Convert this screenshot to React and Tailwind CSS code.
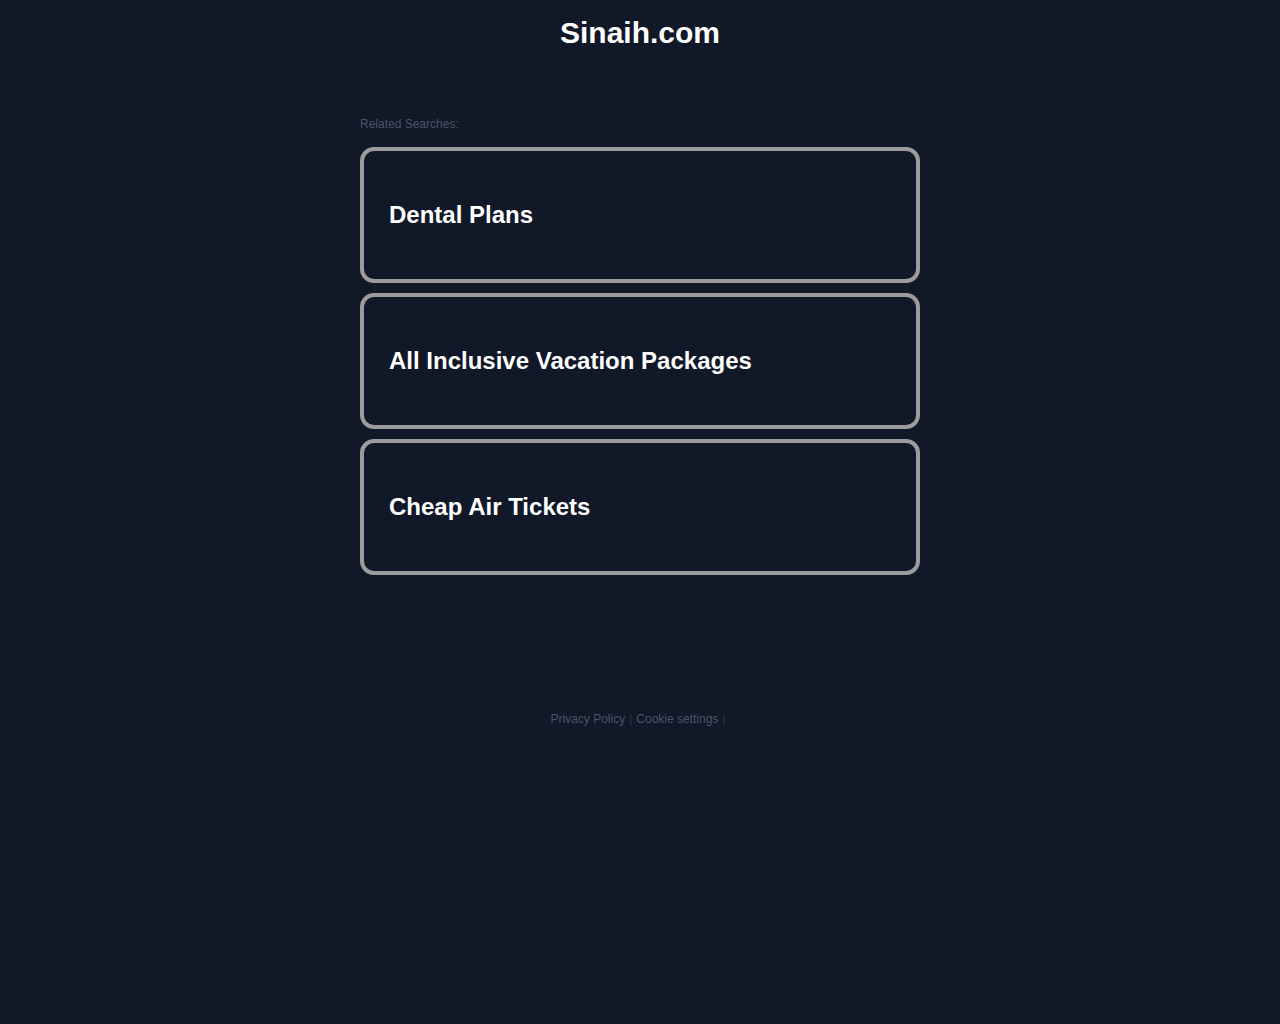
const links = ["Dental Plans", "All Inclusive Vacation Packages", "Cheap Air Tickets"]

const App = () => {
  return (
    <div className="min-h-screen bg-[#111827] font-['Liberation_Sans',Arial,sans-serif]">
      <h1 className="pt-[15px] text-center text-[30px] leading-9 font-bold text-white">Sinaih.com</h1>
      <div className="mx-auto w-[560px] pt-[65px]">
        <p className="text-xs leading-4 text-[#4b5468]">Related Searches:</p>
        <div className="mt-[15px] flex flex-col gap-[10px]">
          {links.map((l) => (
            <a key={l} href="#" className="flex h-[136px] items-center rounded-[14px] border-4 border-[#9c9c9c] px-[25px] text-2xl font-bold text-white">
              {l}
            </a>
          ))}
        </div>
      </div>
      <div className="mt-[136px] text-center text-xs leading-4 text-[#4b5468]">
        <a href="#">Privacy Policy</a>
        <span className="mx-1 text-[#2e3648]">|</span>
        <a href="#">Cookie settings</a>
        <span className="mx-1 text-[#2e3648]">|</span>
      </div>
    </div>
  )
}

export default App
